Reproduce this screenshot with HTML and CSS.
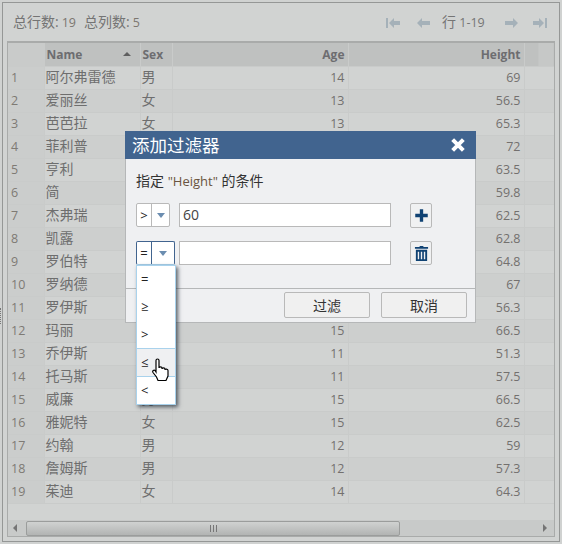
FILE: index.html
```html
<!DOCTYPE html>
<html lang="zh">
<head>
<meta charset="utf-8">
<title>添加过滤器</title>
<link rel="stylesheet" href="styles.css">
</head>
<body>
<div class="grip"></div>
<main class="panel">
  <header class="toolbar">
    <div class="counts"><span>总行数<b>:</b><i>19</i></span><span>总列数<b>:</b><i>5</i></span></div>
    <nav class="pager">
      <svg class="pg first" viewBox="0 0 14 10"><path d="M0 0h2v10H0zM3 5l5-5v3h6v4H8v3z"/></svg>
      <svg class="pg prev" viewBox="0 0 13 10"><path d="M0 5l5-5v3h8v4H5v3z"/></svg>
      <span class="range"><em>行</em> 1-19</span>
      <svg class="pg next" viewBox="0 0 13 10"><path d="M13 5L8 0v3H0v4h8v3z"/></svg>
      <svg class="pg last" viewBox="0 0 14 10"><path d="M14 0h-2v10h2zM11 5L6 0v3H0v4h6v3z"/></svg>
    </nav>
  </header>
  <section class="grid">
    <div class="viewport">
      <table>
        <colgroup><col class="c0"><col class="c1"><col class="c2"><col class="c3"><col class="c4"><col class="c5"></colgroup>
        <thead><tr><th></th><th class="name">Name<span class="sort"></span></th><th>Sex</th><th class="num">Age</th><th class="num">Height</th><th class="fill"></th></tr></thead>
        <tbody>
          <tr><td class="idx">1</td><td>阿尔弗雷德</td><td>男</td><td class="num">14</td><td class="num">69</td><td></td></tr>
          <tr><td class="idx">2</td><td>爱丽丝</td><td>女</td><td class="num">13</td><td class="num">56.5</td><td></td></tr>
          <tr><td class="idx">3</td><td>芭芭拉</td><td>女</td><td class="num">13</td><td class="num">65.3</td><td></td></tr>
          <tr><td class="idx">4</td><td>菲利普</td><td>男</td><td class="num">14</td><td class="num">72</td><td></td></tr>
          <tr><td class="idx">5</td><td>亨利</td><td>男</td><td class="num">14</td><td class="num">63.5</td><td></td></tr>
          <tr><td class="idx">6</td><td>简</td><td>女</td><td class="num">12</td><td class="num">59.8</td><td></td></tr>
          <tr><td class="idx">7</td><td>杰弗瑞</td><td>男</td><td class="num">13</td><td class="num">62.5</td><td></td></tr>
          <tr><td class="idx">8</td><td>凯露</td><td>女</td><td class="num">14</td><td class="num">62.8</td><td></td></tr>
          <tr><td class="idx">9</td><td>罗伯特</td><td>男</td><td class="num">12</td><td class="num">64.8</td><td></td></tr>
          <tr><td class="idx">10</td><td>罗纳德</td><td>男</td><td class="num">15</td><td class="num">67</td><td></td></tr>
          <tr><td class="idx">11</td><td>罗伊斯</td><td>男</td><td class="num">11</td><td class="num">56.3</td><td></td></tr>
          <tr><td class="idx">12</td><td>玛丽</td><td>女</td><td class="num">15</td><td class="num">66.5</td><td></td></tr>
          <tr><td class="idx">13</td><td>乔伊斯</td><td>女</td><td class="num">11</td><td class="num">51.3</td><td></td></tr>
          <tr><td class="idx">14</td><td>托马斯</td><td>男</td><td class="num">11</td><td class="num">57.5</td><td></td></tr>
          <tr><td class="idx">15</td><td>威廉</td><td>男</td><td class="num">15</td><td class="num">66.5</td><td></td></tr>
          <tr><td class="idx">16</td><td>雅妮特</td><td>女</td><td class="num">15</td><td class="num">62.5</td><td></td></tr>
          <tr><td class="idx">17</td><td>约翰</td><td>男</td><td class="num">12</td><td class="num">59</td><td></td></tr>
          <tr><td class="idx">18</td><td>詹姆斯</td><td>男</td><td class="num">12</td><td class="num">57.3</td><td></td></tr>
          <tr><td class="idx">19</td><td>茱迪</td><td>女</td><td class="num">14</td><td class="num">64.3</td><td></td></tr>
        </tbody>
      </table>
    </div>
    <div class="hscroll">
      <span class="arrow left"></span>
      <div class="thumb"><span class="ridges"></span></div>
      <span class="arrow right"></span>
    </div>
  </section>
</main>

<section class="dialog">
  <h2 class="dlg-title"><span>添加过滤器</span>
    <svg class="close" viewBox="0 0 12 12"><path d="M2 2l8 8M10 2l-8 8"/></svg>
  </h2>
  <div class="dlg-body">
    <p class="prompt">指定 <span class="q">"Height"</span> 的条件</p>
    <div class="cond">
      <div class="combo"><span class="op">&gt;</span><span class="drop"><i></i></span></div>
      <div class="input">60</div>
      <button class="icon-btn"><svg viewBox="0 0 18 18"><path d="M7 1.500h4V7h5.500v4H11v5.500H7V11H1.500V7H7z"/></svg></button>
    </div>
    <div class="cond">
      <div class="combo open"><span class="op">=</span><span class="drop"><i></i></span></div>
      <div class="input"></div>
      <button class="icon-btn short"><svg viewBox="0 0 14 16"><path d="M5 0h4v1h5v2H0V1h5zM1 4h12v12H1zM3 6v8h1.500V6zM6.250 6v8h1.500V6zM9.500 6v8H11V6z" fill-rule="evenodd"/></svg></button>
    </div>
  </div>
  <footer class="dlg-foot">
    <button class="btn">过滤</button>
    <button class="btn">取消</button>
  </footer>
</section>

<ul class="menu">
  <li>=</li>
  <li>≥</li>
  <li>&gt;</li>
  <li class="hover">≤</li>
  <li>&lt;</li>
</ul>
<svg class="cursor" viewBox="0 0 18 24"><path d="M4 2.500c0-2 3-2 3 0V10c0-1.500 3-1.500 3 0v1c0-1.500 3-1.500 3 0v1c0-1.500 3-1 3 .5V18l-2 4.500H6L4.500 19 1 14.500c-1-1.500 1-3 2-2l1 1.500z" fill="#fff" stroke="#000" stroke-width="1.200"/></svg>
</body>
</html>
```
FILE: styles.css
```css
* { box-sizing: border-box; }
html, body { margin: 0; padding: 0; }
body {
  width: 562px; height: 544px; overflow: hidden; position: relative;
  background: #d0d2d1; color: #6f6f6f;
  font: 13px/1 "Open Sans", "Noto Sans CJK SC", sans-serif;
}
.grip { position: absolute; left: 0; top: 308px; width: 2px; height: 16px; border-left: 1px dotted #777; }
.panel {
  position: absolute; left: 2px; top: 2px; width: 558px; height: 540px;
  border: 1px solid #959796; background: #d1d3d2;
  display: flex; flex-direction: column; padding: 0 4px 4px;
}
.toolbar { height: 38px; display: flex; align-items: center; justify-content: space-between; flex: none; padding: 1px 8px 0 6px; }
.counts { display: flex; gap: 8px; font-size: 14px; color: #747474; }
.counts b { font-weight: 400; margin: 0 3px 0 0; }
.counts i { font: 12.500px "Open Sans", sans-serif; color: #7c7670; }
.pager { display: flex; align-items: center; }
.pg { fill: #a5b1b9; height: 10px; flex: none; }
.first { width: 14px; }
.prev { width: 13px; margin-left: 17px; }
.range { margin-left: 12px; margin-right: 22px; font-size: 12.500px; color: #757575; width: 41px; white-space: nowrap; }
.range em { font-style: normal; font-size: 14px; }
.next { width: 13px; }
.last { width: 14px; margin-left: 15px; }
.grid {
  flex: 1; border: 2px solid #a9abaa; border-width: 2px 1px 1px; display: flex; flex-direction: column; min-height: 0;
  background: #d1d3d2;
}
.viewport { flex: 1; min-height: 0; overflow: hidden; }
table { border-collapse: collapse; table-layout: fixed; width: 546px; }
.c0 { width: 36px; } .c1 { width: 96px; } .c2 { width: 32px; } .c3 { width: 176px; } .c4 { width: 176px; } .c5 { width: 30px; }
th, td { height: 23px; padding: 0 4px 0 2px; border-right: 1px solid #c9cbca; border-bottom: 1px solid #c9cbca; text-align: left; white-space: nowrap; overflow: hidden; }
th { background: #bfc1c0; color: #6d6d70; font-weight: 700; font-size: 12px; position: relative; padding-top: 2px; }
td { font-size: 14px; color: #6e6e6e; background: #d1d3d2; padding: 0 4px 2px 1px; }
tbody tr:nth-child(even) td { background: #cdcfce; }
td.idx, tbody tr:nth-child(even) td.idx { background: #cbcdcc; font-size: 12.500px; color: #7e7a74; padding: 1px 4px 0 3px; }
th:first-child { background: #c9cbca; }
th.num, td.num { text-align: right; font-size: 12.500px; padding: 1px 3px 0 0; color: #73706e; }
th.num { font-size: 12px; padding-top: 2px; color: #6d6d70; }
th.fill { background: linear-gradient(to right, #bfc1c0 14px, #c6c8c7 14px); border-right: 0; }
.sort { position: absolute; right: 9px; top: 9px; border: 4px solid transparent; border-top: 0; border-bottom: 4px solid #5f5f5f; }
.hscroll { flex: none; height: 16px; background: #c8cac9; display: flex; align-items: center; position: relative; }
.arrow { width: 0; height: 0; border: 4px solid transparent; flex: none; }
.arrow.left { border-left: 0; border-right: 4px solid #757575; margin-left: 5px; }
.arrow.right { border-right: 0; border-left: 4px solid #757575; margin-left: 143px; }
.thumb { width: 374px; height: 15px; margin-left: 9px; border: 1px solid #9b9d9c; border-radius: 2px; background: linear-gradient(#d0d2d1, #b2b4b3); display: flex; align-items: center; justify-content: center; }
.ridges { width: 7px; height: 7px; background: repeating-linear-gradient(to right, #777 0 1px, transparent 1px 3px); }

.dialog {
  position: absolute; left: 125px; top: 131px; width: 351px; height: 192px;
  background: #eff0f2; border: 1px solid #b5b7b8; border-top: 0;
  display: flex; flex-direction: column; color: #333;
}
.dlg-title { margin: 0 -1px; height: 28px; background: #41648f; color: #fff; display: flex; align-items: center; justify-content: space-between; padding: 1px 10px 0 7px; font-size: 17.500px; font-weight: 400; flex: none; }
.close { width: 16px; height: 16px; stroke: #fff; stroke-width: 3; fill: none; margin-top: -1px; }
.dlg-body { flex: 1; padding: 0 0 0 10px; }
.prompt { margin: 14px 0; font-size: 14px; line-height: 16px; color: #333; }
.q { color: #6a5440; font-size: 13px; }
.cond { display: flex; height: 24px; margin-bottom: 14px; }
.combo { display: flex; height: 24px; width: 34px; border: 1px solid #b9b9b9; border-radius: 2px; background: #fff; flex: none; font-size: 13px; color: #222; }
.combo.open { width: 39px; border-color: #41648f; border-bottom-color: #a9d2ec; }
.op { width: 15px; display: flex; align-items: center; justify-content: center; border-right: 1px solid #b9b9b9; }
.open .op { border-right-color: #41648f; }
.drop { flex: 1; display: flex; align-items: center; justify-content: center; }
.drop i { border: 4px solid transparent; border-bottom: 0; border-top: 5px solid #6b8db0; }
.input { width: 212px; margin-left: 9px; height: 24px; border: 1px solid #b9b9b9; background: #fff; padding: 0 3px; font-size: 14px; line-height: 22px; color: #444; flex: none; }
.combo.open + .input { margin-left: 4px; }
.icon-btn { width: 22px; height: 25px; margin-left: 19px; padding: 0; background: #f0f1f2; border: 1px solid #b9b9b9; border-radius: 2px; display: flex; align-items: center; justify-content: center; flex: none; }
.icon-btn.short { height: 24px; }
.icon-btn svg { width: 15px; height: 15px; fill: #0f4273; }
.dlg-foot { flex: none; height: 34px; border-top: 1px solid #b5b7b8; display: flex; justify-content: flex-end; gap: 11px; padding: 3px 8px 0 0; }
.btn { width: 86px; height: 26px; background: #f0f0f0; border: 1px solid #b9b9b9; border-radius: 2px; font: 14px "Noto Sans CJK SC", sans-serif; color: #333; padding: 0; }

.menu {
  position: absolute; left: 136px; top: 265px; width: 40px; height: 140px; margin: 0; padding: 0; list-style: none;
  background: #fff; border: 1px solid #a9d2ec; box-shadow: 2px 2px 4px rgba(40,50,60,.75);
  display: flex; flex-direction: column; font-size: 13px; color: #222;
}
.menu li { flex: 1; display: flex; align-items: center; padding-left: 4px; }
.menu li.hover { background: #eff0f2; border-top: 1px solid #a9d2ec; border-bottom: 1px solid #a9d2ec; }
.cursor { position: absolute; left: 152px; top: 358px; width: 18px; height: 24px; }
```
